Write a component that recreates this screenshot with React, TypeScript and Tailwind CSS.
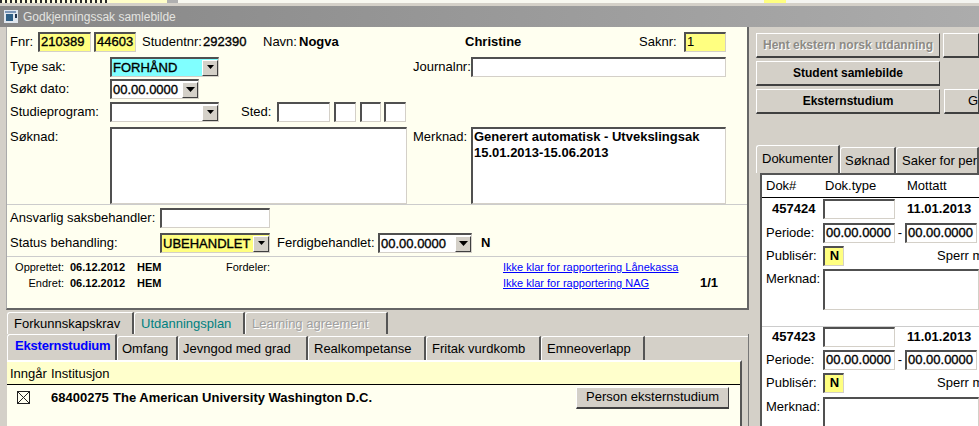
import React from "react";

const SEMI = "[-webkit-text-stroke:0.35px_#000]";

const Sunken = ({ w, h = "h-[20px]", bg = "bg-white", bold = false, semi = false, children, className = "" }: { w: string; h?: string; bg?: string; bold?: boolean; semi?: boolean; children?: React.ReactNode; className?: string }) => (
  <div className={`${w} ${h} ${bg} ${className} shrink-0 border border-[#d4d0c8] border-l-[#505050] border-t-[#505050] border-t-2 border-l-2 pl-[1px] leading-[16px] overflow-hidden whitespace-nowrap ${bold ? "font-bold" : ""} ${semi ? SEMI : ""}`}>{children}</div>
);

const Arrow = ({ dark = false }: { dark?: boolean }) => (
  <div className="w-[16px] h-[16px] shrink-0 bg-[#d4d0c8] border border-[#fff] border-r-[#404040] border-b-[#404040] flex items-center justify-center">
    <svg width="9" height="5" viewBox="0 0 9 5"><path d={dark ? "M0 0h9L4.5 5z" : "M1 0h7L4.5 4z"} fill="#000" /></svg>
  </div>
);

const Select = ({ w, bg = "bg-white", text, dark }: { w: string; bg?: string; text?: string; dark?: boolean }) => (
  <div className={`${w} h-[20px] ${bg} shrink-0 flex items-center justify-between border border-[#d4d0c8] border-l-[#505050] border-t-[#505050] border-t-2 border-l-2 pl-[1px] whitespace-nowrap`}>
    <span className={`leading-[16px] ${SEMI}`}>{text}</span>
    <Arrow dark={dark} />
  </div>
);

const Btn = ({ w, disabled = false, bold = true, children, className = "" }: { w: string; disabled?: boolean; bold?: boolean; children?: React.ReactNode; className?: string }) => (
  <div className={`${w} ${className} h-[25px] shrink-0 bg-[#d4d0c8] border border-[#fff] border-r-[#404040] border-b-[#404040] border-b-2 flex items-center justify-center whitespace-nowrap overflow-hidden ${bold ? "font-bold text-[12px]" : "text-[13px]"} ${disabled ? "text-[#8c8a85] [text-shadow:1px_1px_0_#fff]" : "text-black"}`}>{children}</div>
);

const Tab = ({ w, h = "h-[22px]", pl = "pl-[6px]", className = "", children }: { w: string; h?: string; pl?: string; className?: string; children: React.ReactNode }) => (
  <div className={`${w} ${h} ${pl} ${className} shrink-0 bg-[#d4d0c8] border-t border-l border-t-white border-l-white border-r-2 border-r-[#555] rounded-tl-[3px] flex items-center whitespace-nowrap overflow-hidden`}>{children}</div>
);

const DocBlock = ({ nr, a, b, c }: { nr: string; a: string; b: string; c: string }) => (
  <div className="flex flex-col">
    <div className="flex items-center h-[20px]">
      <span className="w-[61px] pl-[10px] font-bold shrink-0">{nr}</span>
      <Sunken w="w-[72px]" />
      <span className="ml-[12px] font-bold shrink-0">11.01.2013</span>
    </div>
    <div className={`flex items-center h-[20px] ${a}`}>
      <span className="w-[61px] pl-[4px] shrink-0">Periode:</span>
      <Sunken w="w-[72px]" semi>00.00.0000</Sunken>
      <span className="w-[10px] text-center shrink-0">-</span>
      <Sunken w="w-[72px]" semi>00.00.0000</Sunken>
    </div>
    <div className={`flex items-center h-[20px] ${b}`}>
      <span className="w-[61px] pl-[4px] shrink-0">Publisér:</span>
      <Sunken w="w-[21px]" bg="bg-[#ffff80]" bold className="text-center">N</Sunken>
      <span className="ml-[93px] shrink-0 whitespace-nowrap">Sperr m</span>
    </div>
    <div className={`flex items-start ${c}`}>
      <span className="w-[61px] pl-[4px] shrink-0">Merknad:</span>
      <Sunken w="w-[156px]" h="h-[41px]" />
    </div>
  </div>
);

export default function App() {
  return (
    <div className="w-[979px] h-[426px] overflow-hidden bg-[#d4d0c8] text-[13px] text-black flex flex-col" style={{ fontFamily: '"Liberation Sans", Arial, sans-serif' }}>
      {/* window behind */}
      <div className="h-[6px] shrink-0 flex flex-col">
        <div className="h-[3px] flex">
          <div className="w-[110px] bg-[repeating-linear-gradient(90deg,#2a2a2a_0px,#2a2a2a_2px,#fffee0_2px,#fffee0_5px)]" />
          <div className="w-[57px] bg-[#fffec8]" />
          <div className="w-[11px] bg-[#b0b0b0]" />
          <div className="w-[586px] bg-[#f8f8f0]" />
          <div className="w-[22px] bg-[#ffff80]" />
          <div className="flex-1 bg-[#f4f4f0]" />
        </div>
      </div>
      {/* title bar */}
      <div className="h-[21px] shrink-0 bg-linear-to-r from-[#868686] to-[#acacac] flex items-center pl-[4px] text-[#e4e4e0] text-[12px]">
        <svg width="14" height="13" viewBox="0 0 14 13" className="mr-[5px]">
          <rect width="14" height="13" fill="#dfe6ee" />
          <rect x="1" y="1" width="11" height="2" fill="#7d97b8" />
          <rect x="2" y="4" width="7" height="7" fill="#2e5f86" />
          <rect x="11" y="4" width="2" height="4" fill="#20344e" />
        </svg>
        <span>Godkjenningssak samlebilde</span>
      </div>
      {/* body */}
      <div className="flex flex-1 min-h-0">
        {/* left column */}
        <div className="w-[750px] shrink-0 pl-[6px] flex flex-col">
          {/* form */}
          <div className="w-[743px] h-[283px] shrink-0 bg-[#fffff0] border-r-2 border-b-2 border-r-[#666] border-b-[#666] border-l border-l-[#aaa] flex flex-col">
            <div className="flex items-center h-[20px] mt-[5px] pl-[3px]">
              <span className="w-[28px] shrink-0">Fnr:</span>
              <Sunken w="w-[53px]" bg="bg-[#ffff80]" semi>210389</Sunken>
              <Sunken w="w-[42px]" bg="bg-[#ffff80]" semi className="ml-[3px]">44603</Sunken>
              <span className="ml-[6px] w-[61px] shrink-0">Studentnr:</span>
              <span className="shrink-0 w-[60px] [-webkit-text-stroke:0.35px_#000]">292390</span>
              <span className="shrink-0 w-[36px]">Navn:</span>
              <span className="font-bold shrink-0 w-[166px]">Nogva</span>
              <span className="font-bold shrink-0 w-[174px]">Christine</span>
              <span className="shrink-0 w-[45px]">Saknr:</span>
              <Sunken w="w-[42px]" bg="bg-[#ffff80]">1</Sunken>
            </div>
            <div className="flex items-center h-[20px] mt-[5px] pl-[3px]">
              <span className="w-[100px] shrink-0">Type sak:</span>
              <Select w="w-[109px]" bg="bg-[#80ffff]" text="FORHÅND" />
              <span className="ml-[194px] w-[58px] shrink-0 whitespace-nowrap">Journalnr:</span>
              <Sunken w="w-[255px]" />
            </div>
            <div className="flex items-center h-[20px] mt-[2px] pl-[3px]">
              <span className="w-[100px] shrink-0">Søkt dato:</span>
              <Select w="w-[89px]" text="00.00.0000" dark />
            </div>
            <div className="flex items-center h-[20px] mt-[3px] pl-[3px]">
              <span className="w-[100px] shrink-0">Studieprogram:</span>
              <Select w="w-[109px]" />
              <span className="ml-[22px] w-[36px] shrink-0">Sted:</span>
              <Sunken w="w-[53px]" />
              <Sunken w="w-[22px]" className="ml-[4px]" />
              <Sunken w="w-[21px]" className="ml-[4px]" />
              <Sunken w="w-[22px]" className="ml-[3px]" />
            </div>
            <div className="flex items-start pl-[3px] mt-[5px] border-b border-b-[#ccc]">
              <span className="w-[100px] shrink-0">Søknad:</span>
              <Sunken w="w-[297px]" h="h-[77px]" />
              <span className="ml-[6px] w-[58px] shrink-0">Merknad:</span>
              <Sunken w="w-[255px]" h="h-[77px]" bold className="whitespace-normal">Generert automatisk - Utvekslingsak<br />15.01.2013-15.06.2013</Sunken>
            </div>
            <div className="flex items-center h-[20px] mt-[3px] pl-[3px]">
              <span className="w-[150px] shrink-0">Ansvarlig saksbehandler:</span>
              <Sunken w="w-[110px]" />
            </div>
            <div className="flex items-center h-[22px] mt-[4px] pb-[2px] pl-[3px] border-b border-b-[#ccc] box-content">
              <span className="w-[150px] shrink-0">Status behandling:</span>
              <Select w="w-[110px]" bg="bg-[#ffff80]" text="UBEHANDLET" />
              <span className="ml-[7px] w-[101px] shrink-0">Ferdigbehandlet:</span>
              <Select w="w-[94px]" text="00.00.0000" dark />
              <span className="ml-[9px] font-bold">N</span>
            </div>
            <div className="flex text-[11px] pt-[2px] leading-[16px]">
              <div className="flex flex-col shrink-0 w-[219px]">
                <div className="flex"><span className="w-[57px] text-right">Opprettet:</span><span className="ml-[6px] w-[67px] font-bold">06.12.2012</span><span className="font-bold">HEM</span></div>
                <div className="flex"><span className="w-[57px] text-right">Endret:</span><span className="ml-[6px] w-[67px] font-bold">06.12.2012</span><span className="font-bold">HEM</span></div>
              </div>
              <span className="w-[277px] shrink-0">Fordeler:</span>
              <div className="flex flex-col shrink-0 w-[197px] text-[#0000ff] underline">
                <span>Ikke klar for rapportering Lånekassa</span>
                <span>Ikke klar for rapportering NAG</span>
              </div>
              <span className="font-bold text-[13px] self-end">1/1</span>
            </div>
          </div>
          {/* tabs */}
          <div className="flex h-[22px] shrink-0 mt-[2px] ml-[1px]">
            <Tab w="w-[127px]">Forkunnskapskrav</Tab>
            <Tab w="w-[111px]" className="text-[#008080]">Utdanningsplan</Tab>
            <Tab w="w-[143px]" className="text-[#a0a0a0] [text-shadow:1px_1px_0_#fff]">Learning agreement</Tab>
          </div>
          <div className="w-[743px] flex-1 flex flex-col border-r border-r-[#777] pl-[1px]">
            <div className="flex h-[26px] shrink-0 items-end">
              <Tab w="w-[110px]" h="h-[26px]" pl="pl-[7px]" className="text-[#0000ff] font-bold tracking-[-0.2px] pb-[3px]">Eksternstudium</Tab>
              <Tab w="w-[61px]" h="h-[24px]" pl="pl-[4px]">Omfang</Tab>
              <Tab w="w-[130px]" h="h-[24px]" pl="pl-[4px]">Jevngod med grad</Tab>
              <Tab w="w-[118px]" h="h-[24px]" pl="pl-[5px]">Realkompetanse</Tab>
              <Tab w="w-[115px]" h="h-[24px]" pl="pl-[5px]">Fritak vurdkomb</Tab>
              <Tab w="w-[104px]" h="h-[24px]" pl="pl-[5px]">Emneoverlapp</Tab>
              <div className="flex-1 h-[24px] border-t border-t-white" />
            </div>
            {/* table */}
            <div className="w-[735px] flex-1 border-t-2 border-t-white border-r-2 border-r-[#555] bg-[#fffff0] flex flex-col">
              <div className="h-[23px] shrink-0 bg-[#ffffcc] border-b border-b-black flex items-center pl-[3px] pt-[2px]">
                <span className="w-[41px]">Inngår</span><span>Institusjon</span>
              </div>
              <div className="flex items-center h-[25px] pl-[10px]">
                <svg width="13" height="13" viewBox="0 0 13 13" className="shrink-0">
                  <rect x=".5" y=".5" width="12" height="12" fill="#fffff0" stroke="#222" />
                  <path d="M1 1l11 11M12 1L1 12" stroke="#222" />
                </svg>
                <span className="ml-[21px] font-bold w-[62px]">68400275</span>
                <span className="font-bold w-[463px]">The American University Washington D.C.</span>
                <Btn w="w-[153px]" bold={false} className="!h-[22px]">Person eksternstudium</Btn>
              </div>
            </div>
          </div>
        </div>
        {/* right column */}
        <div className="flex-1 min-w-0 pl-[6px] pt-[6px] overflow-hidden flex flex-col">
          <div className="flex flex-col gap-[3px] shrink-0">
            <div className="flex gap-[3px]"><Btn w="w-[184px]" disabled>Hent ekstern norsk utdanning</Btn><Btn w="w-[36px]" /></div>
            <div className="flex gap-[3px]"><Btn w="w-[184px]">Student samlebilde</Btn></div>
            <div className="flex gap-[4px]"><Btn w="w-[184px]">Eksternstudium</Btn><Btn w="w-[35px]" bold={false} className="!justify-start pl-[23px]">Ge</Btn></div>
          </div>
          <div className="flex shrink-0 mt-[31px] h-[28px] items-end w-[223px] overflow-hidden">
            <Tab w="w-[84px]" h="h-[28px]" pl="pl-[5px]" className="pb-[2px]">Dokumenter</Tab>
            <Tab w="w-[56px]" h="h-[26px]" pl="pl-[4px]">Søknad</Tab>
            <Tab w="w-[83px]" h="h-[26px]" pl="pl-[5px]">Saker for pers</Tab>
          </div>
          <div className="flex-1 ml-[4px] w-[219px] bg-white border-t-2 border-l-2 border-t-[#555] border-l-[#555] flex flex-col">
            <div className="h-[23px] shrink-0 border-b border-b-black flex items-center pl-[4px]">
              <span className="w-[59px]">Dok#</span><span className="w-[82px]">Dok.type</span><span>Mottatt</span>
            </div>
            <div className="mt-[1px]">
              <DocBlock nr="457424" a="mt-[4px]" b="mt-[3px]" c="mt-[3px]" />
            </div>
            <div className="mt-[16px] border-t border-t-[#ccc]" />
            <DocBlock nr="457423" a="mt-[3px]" b="mt-[3px]" c="mt-[4px]" />
          </div>
        </div>
      </div>
    </div>
  );
}
